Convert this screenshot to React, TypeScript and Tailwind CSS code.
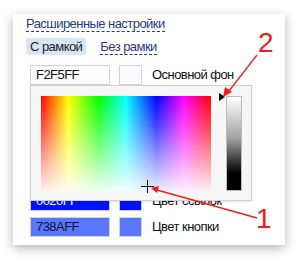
import React from "react";

type Row = { hex: string; bg: string; swatch: string; label: string; text?: string };

const rows: Row[] = [
  { hex: "F2F5FF", bg: "#fdfdff", swatch: "#fbfcff", label: "Основной фон" },
  { hex: "FFFFFF", bg: "#ffffff", swatch: "#ffffff", label: "Фон блоков" },
  { hex: "000000", bg: "#000000", swatch: "#000000", label: "Цвет текста", text: "#ffffff" },
  { hex: "666666", bg: "#666666", swatch: "#666666", label: "Цвет подписей", text: "#ffffff" },
  { hex: "0020FF", bg: "#0010ff", swatch: "#0010ff", label: "Цвет ссылок", text: "#ffffff" },
  { hex: "738AFF", bg: "#5a78ff", swatch: "#5a78ff", label: "Цвет кнопки", text: "#111133" },
];

const ColorRow = ({ row }: { row: Row }) => (
  <div className="flex items-center h-[20px]">
    <div
      className="w-[80px] h-[20px] border border-[#d2d2d2] pl-[5px] text-[13px] leading-[18px] text-[#111]"
      style={{ backgroundColor: row.bg, color: row.text }}
    >
      {row.hex}
    </div>
    <div
      className="ml-[9px] w-[23px] h-[20px] border border-[#d2d2d2]"
      style={{ backgroundColor: row.swatch }}
    />
    <span className="ml-[10px] text-[13px] text-[#111]">{row.label}</span>
  </div>
);

export default function App() {
  return (
    <div className="relative w-[300px] h-[261px] bg-white overflow-hidden pl-[13px] pt-[14px] font-['Liberation_Sans',Arial,sans-serif] tracking-[-0.55px]">
      <div className="relative w-[272px] h-[231px] bg-white shadow-[0_3px_10px_rgba(0,0,0,0.3)] flex flex-col pl-[13px] pt-[1px]">
        <div className="h-[16px] leading-[16px]">
          <span className="text-[13px] text-[#1f3a8a] border-b border-dashed border-[#1f3a8a]">
            Расширенные настройки
          </span>
        </div>
        <div className="flex items-center mt-[7px] h-[17px]">
          <span className="px-[4px] h-[17px] leading-[17px] rounded-[3px] bg-[#d6e6f8] text-[13px] text-[#222]">
            С рамкой
          </span>
          <span className="ml-[14px] text-[13px] leading-[15px] text-[#1f3a8a] border-b border-dashed border-[#1f3a8a]">
            Без рамки
          </span>
        </div>
        <div className="flex flex-col pl-[4px] mt-[10px]">
          <ColorRow row={rows[0]} />
          <div className="flex flex-col gap-[6px] mt-[28px]">
            {rows.slice(1).map((r) => (
              <ColorRow key={r.hex} row={r} />
            ))}
          </div>
        </div>

        {/* color picker popup, drawn over the rows */}
        <div className="absolute left-[17px] top-[71px] w-[222px] h-[116px] bg-[#f6f6f6] border border-[#d0d0d0] shadow-[0_1px_2px_rgba(0,0,0,0.12)] flex pt-[10px] pl-[10px]">
          <div className="relative w-[170px] h-[95px] bg-[linear-gradient(to_right,#ff0000,#ffff00_16%,#00ff00_34%,#00ffff_50%,#0000ff_68%,#ff00ff_84%,#ff0000)]">
            <div className="absolute inset-0 bg-[linear-gradient(to_bottom,rgba(255,255,255,0),rgba(255,255,255,0.25)_30%,rgba(255,255,255,0.93))]" />
            <div className="absolute left-[100px] top-[90px] w-[13px] h-[1px] bg-black" />
            <div className="absolute left-[106px] top-[84px] w-[1px] h-[13px] bg-black" />
          </div>
          <div className="relative ml-[15px]">
            <div className="absolute -left-[7px] -top-[3px] w-0 h-0 border-y-[4px] border-y-transparent border-l-[6px] border-l-black" />
            <div className="w-[16px] h-[95px] border border-[#bbb] bg-[linear-gradient(to_bottom,#ffffff,#a0a0a0_45%,#000000_82%,#000000)]" />
          </div>
        </div>
      </div>

      {/* annotations */}
      <svg className="absolute left-0 top-0" width="300" height="261" viewBox="0 0 300 261">
        <line x1="257" y1="55" x2="229" y2="91" stroke="#ee1c1c" strokeWidth="1.3" />
        <polygon points="223,97 225,87 232,92" fill="#ee1c1c" />
        <line x1="257" y1="218" x2="157" y2="190" stroke="#ee1c1c" strokeWidth="1.3" />
        <polygon points="151,188 159,186 157,193" fill="#ee1c1c" />
      </svg>
      <span className="absolute left-[258px] top-[29px] text-[28px] leading-[28px] tracking-normal text-[#ee1c1c]">2</span>
      <span className="absolute left-[256px] top-[205px] text-[28px] leading-[28px] tracking-normal text-[#ee1c1c]">1</span>
    </div>
  );
}
